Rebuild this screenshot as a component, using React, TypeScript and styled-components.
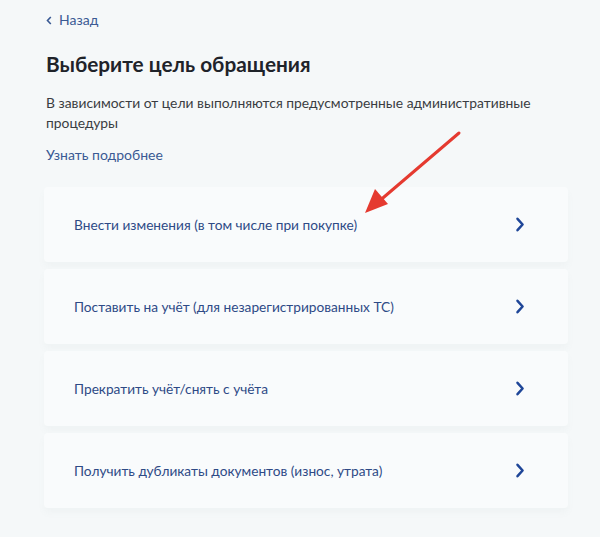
import React from "react";
import styled, { createGlobalStyle } from "styled-components";

const Global = createGlobalStyle`
  html, body { margin: 0; padding: 0; background: #f5f8f9; }
  body { font-family: Lato, "Noto Sans", sans-serif; }
`;

const Page = styled.div`
  width: 600px;
  height: 537px;
  overflow: hidden;
  position: relative;
  background: #f5f8f9;
  padding: 12px 32px 0 46px;
  box-sizing: border-box;
`;

const Back = styled.a`
  display: flex;
  align-items: center;
  gap: 7px;
  color: #3a5a94;
  font-size: 14px;
  line-height: 16px;
  text-decoration: none;
`;

const Title = styled.h1`
  margin: 23px 0 0;
  font-size: 20.8px;
  line-height: 26px;
  font-weight: 700;
  color: #1f232a;
`;

const Desc = styled.p`
  margin: 16px 0 0;
  font-size: 13.85px;
  line-height: 20px;
  color: #3a3d42;
`;

const More = styled.a`
  display: block;
  margin-top: 13px;
  font-size: 14px;
  line-height: 18px;
  color: #3a5a94;
  text-decoration: none;
`;

const List = styled.div`
  margin: 23px 0 0 -2px;
  display: flex;
  flex-direction: column;
  gap: 7px;
  width: 524px;
`;

const Card = styled.div`
  height: 75px;
  display: flex;
  align-items: center;
  justify-content: space-between;
  padding: 0 43px 0 30px;
  background: #f9fbfc;
  box-shadow: 0 5px 7px rgba(120, 130, 140, 0.045);
  border-radius: 4px;
  box-sizing: border-box;
`;

const CardText = styled.span`
  font-size: 13.7px;
  color: #2e4a86;
`;

const Arrow = styled.svg`
  position: absolute;
  left: 355px;
  top: 125px;
  pointer-events: none;
`;

const items = [
  "Внести изменения (в том числе при покупке)",
  "Поставить на учёт (для незарегистрированных ТС)",
  "Прекратить учёт/снять с учёта",
  "Получить дубликаты документов (износ, утрата)",
];

const Chevron = () => (
  <svg width="10" height="15" viewBox="0 0 10 15">
    <path d="M2.5 1.8 L7.6 7.5 L2.5 13.2" fill="none" stroke="#1f4698" strokeWidth="2.5" strokeLinecap="round" strokeLinejoin="round" />
  </svg>
);

export default function App() {
  return (
    <Page>
      <Global />
      <Back href="#">
        <svg width="6" height="9" viewBox="0 0 6 9">
          <path d="M4.8 1 L1.5 4.5 L4.8 8" fill="none" stroke="#3a5a94" strokeWidth="1.6" />
        </svg>
        Назад
      </Back>
      <Title>Выберите цель обращения</Title>
      <Desc>
        В зависимости от цели выполняются предусмотренные административные
        <br />
        процедуры
      </Desc>
      <More href="#">Узнать подробнее</More>
      <List>
        {items.map((t) => (
          <Card key={t}>
            <CardText>{t}</CardText>
            <Chevron />
          </Card>
        ))}
      </List>
      <Arrow width="115" height="100" viewBox="0 0 115 100">
        <line x1="104" y1="8" x2="22" y2="78" stroke="#e53a30" strokeWidth="3" strokeLinecap="round" />
        <polygon points="10,88 20,64 33,79" fill="#e53a30" />
      </Arrow>
    </Page>
  );
}
